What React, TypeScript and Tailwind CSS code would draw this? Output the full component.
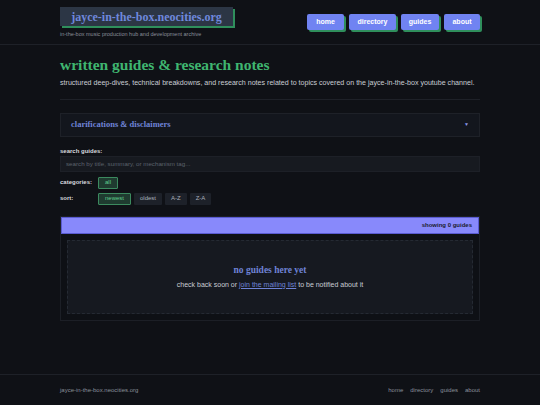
import React from 'react'

// ─── Helpers ─────────────────────────────────────────────────────────────────

const serif = { fontFamily: '"Liberation Serif", "DejaVu Serif", serif' }

const navItems = [
  { label: 'home', w: 'w-[37px]' },
  { label: 'directory', w: 'w-[47px]' },
  { label: 'guides', w: 'w-[38px]' },
  { label: 'about', w: 'w-[36px]' },
]

function NavButton({ label, w }: { label: string; w: string }) {
  return (
    <a
      href="#"
      className={`flex h-[16px] ${w} items-center justify-center rounded-[2px] bg-[#7083f2] text-[7px] font-bold text-white shadow-[2px_2px_0_#2f8f5c]`}
    >
      {label}
    </a>
  )
}

function Chip({ label, active }: { label: string; active?: boolean }) {
  return (
    <button
      className={`flex h-[12px] items-center rounded-[1px] px-[6px] text-[6px] ${
        active
          ? 'border border-[#3c8a5f] bg-[#1f3b30] text-[#5fcf8f]'
          : 'bg-[#1d2129] text-[#aab0ba]'
      }`}
    >
      {label}
    </button>
  )
}

// ─── Main Component ───────────────────────────────────────────────────────────

export default function App() {
  return (
    <div
      className="flex min-h-[405px] flex-col bg-[#0f1116] text-[#c9cdd4] antialiased"
      style={{ fontFamily: '"Liberation Sans", Arial, sans-serif' }}
    >
      {/* Header */}
      <header className="border-b border-[#1e2128]">
        <div className="mx-auto flex h-[44px] w-[420px] items-start justify-between">
          <div className="pt-[7px]">
            <div
              className="flex h-[19px] w-[173px] items-center justify-center whitespace-nowrap bg-[#2c3645] text-[12px] font-bold text-[#6f88dc] shadow-[2px_2px_0_#2f8f5c]"
              style={serif}
            >
              jayce-in-the-box.neocities.org
            </div>
            <p className="mt-[4px] whitespace-nowrap text-[5.5px] text-[#8a909a]">
              in-the-box music production hub and development archive
            </p>
          </div>
          <nav className="flex gap-[5px] pt-[14px]">
            {navItems.map((n) => (
              <NavButton key={n.label} label={n.label} w={n.w} />
            ))}
          </nav>
        </div>
      </header>

      {/* Main */}
      <main className="mx-auto w-[420px] flex-1">
        <h1 className="mt-[8px] whitespace-nowrap text-[15.5px] font-bold leading-[24px] text-[#3fb670]" style={serif}>
          written guides &amp; research notes
        </h1>
        <p className="mt-[1px] text-[7.1px] text-[#c9cdd4]">
          structured deep-dives, technical breakdowns, and research notes related to topics covered on the jayce-in-the-box youtube channel.
        </p>

        <div className="mt-[10px] border-t border-[#1e2128]" />

        <div className="mt-[13px] flex h-[24px] items-center justify-between border border-[#1e2128] bg-[#13161d] px-[10px]">
          <span className="text-[8.5px] font-bold text-[#6f83d6]" style={serif}>
            clarifications &amp; disclaimers
          </span>
          <span className="text-[5px] text-[#8b95e8]">▼</span>
        </div>

        <label className="mt-[10px] block text-[6px] font-bold leading-[8px] text-[#d6d9de]">search guides:</label>
        <div className="mt-[1px] flex h-[16px] items-center border border-[#1d2027] bg-[#171a20] px-[5px] text-[6.2px] text-[#5c626c]">
          search by title, summary, or mechanism tag...
        </div>

        <div className="mt-[5px] flex items-center">
          <span className="w-[38px] text-[6px] font-bold text-[#d6d9de]">categories:</span>
          <Chip label="all" active />
        </div>
        <div className="mt-[4px] flex items-center">
          <span className="w-[38px] text-[6px] font-bold text-[#d6d9de]">sort:</span>
          <div className="flex gap-[3px]">
            <Chip label="newest" active />
            <Chip label="oldest" />
            <Chip label="A-Z" />
            <Chip label="Z-A" />
          </div>
        </div>

        {/* Results */}
        <div className="mt-[11px] border border-[#1c1f26] bg-[#0e1015]">
          <div className="flex h-[17px] items-center justify-end border border-[#5a5bd0] bg-[#8889fb] px-[6px] text-[6px] font-bold text-[#1a1b2e]">
            showing 0 guides
          </div>
          <div className="p-[6px]">
            <div className="flex h-[74px] flex-col items-center justify-center border border-dashed border-[#252a33] bg-[#161920]">
              <h2 className="text-[9.5px] font-bold text-[#6f83d6]" style={serif}>
                no guides here yet
              </h2>
              <p className="mt-[2px] text-[7px] text-[#c9cdd4]">
                check back soon or{' '}
                <a href="#" className="text-[#6f83d6] underline">
                  join the mailing list
                </a>{' '}
                to be notified about it
              </p>
            </div>
          </div>
        </div>
      </main>

      {/* Footer */}
      <footer className="border-t border-[#1e2128]">
        <div className="mx-auto flex h-[30px] w-[420px] items-center justify-between text-[6px] text-[#8a909a]">
          <span>jayce-in-the-box.neocities.org</span>
          <div className="flex gap-[7px]">
            {navItems.map((n) => (
              <a key={n.label} href="#">
                {n.label}
              </a>
            ))}
          </div>
        </div>
      </footer>
    </div>
  )
}
